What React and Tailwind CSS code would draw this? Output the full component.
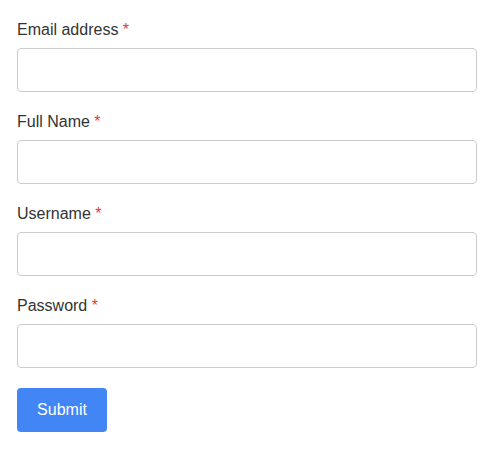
export default function App() {
  const fields = ["Email address", "Full Name", "Username", "Password"];
  return (
    <div className="min-h-screen bg-white pl-[17px] pt-[18px]" style={{ fontFamily: '"Liberation Sans", Arial, sans-serif' }}>
      <form className="flex w-[460px] flex-col">
        {fields.map((f) => (
          <div key={f} className="mb-[18px] flex flex-col">
            <label className="mb-[6px] text-[16px] leading-[24px] text-[#333333]">
              {f} <span className="text-[#e53935]">*</span>
            </label>
            <input
              type={f === "Password" ? "password" : "text"}
              className="h-[44px] w-full rounded-[4px] border border-[#cccccc] bg-white px-3 outline-none"
            />
          </div>
        ))}
        <div className="mt-[2px]">
          <button
            type="button"
            className="h-[44px] w-[90px] rounded-[4px] bg-[#4285f4] text-[16px] text-white"
          >
            Submit
          </button>
        </div>
      </form>
    </div>
  );
}
